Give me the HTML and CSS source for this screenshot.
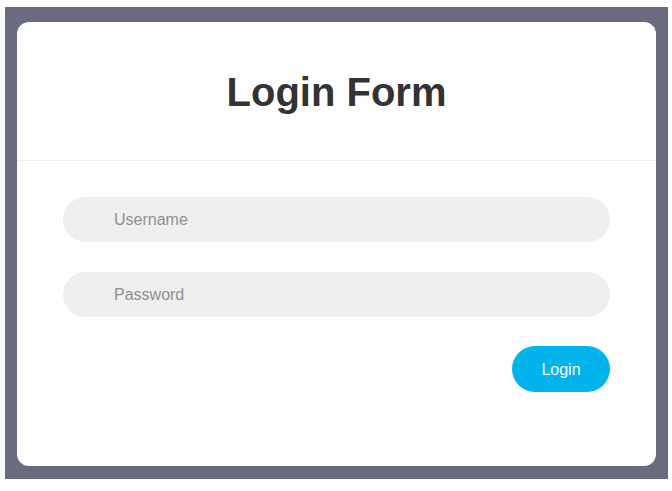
FILE: index.html
```html
<!DOCTYPE html>
<html>
<head>
<meta charset="utf-8">
<link rel="stylesheet" href="styles.css">
</head>
<body>
<div class="frame">
  <div class="card">
    <div class="card-header">
      <h1 class="title">Login Form</h1>
    </div>
    <form class="form">
      <input class="field" type="text" placeholder="Username">
      <input class="field" type="password" placeholder="Password">
      <div class="actions">
        <button class="btn" type="button">Login</button>
      </div>
    </form>
  </div>
</div>
</body>
</html>
```
FILE: styles.css
```css
html, body {
  margin: 0;
  padding: 0;
  background: #ffffff;
}
body {
  padding: 7px 4px 0 5px;
  font-family: "Liberation Sans", Arial, sans-serif;
}
.frame {
  background: #6b6b80;
  height: 472px;
  box-sizing: border-box;
  padding: 15px 12px 13px 12px;
}
.card {
  background: #ffffff;
  border-radius: 12px;
  height: 444px;
  display: flex;
  flex-direction: column;
}
.card-header {
  height: 138px;
  border-bottom: 1px solid #eeeeee;
  display: flex;
  align-items: center;
  justify-content: center;
}
.title {
  margin: 0;
  font-size: 40px;
  font-weight: bold;
  color: #333333;
  line-height: 1;
  padding-top: 2px;
}
.form {
  padding: 36px 46px 0 46px;
  display: flex;
  flex-direction: column;
  gap: 30px;
}
.field {
  height: 45px;
  box-sizing: border-box;
  border: none;
  outline: none;
  border-radius: 23px;
  background: #efefef;
  padding: 0 0 0 51px;
  font-family: "Liberation Sans", Arial, sans-serif;
  font-size: 16px;
  color: #333;
  margin: 0;
}
.field::placeholder {
  color: #8f8f8f;
  opacity: 1;
}
.actions {
  display: flex;
  justify-content: flex-end;
  margin-top: -1px;
}
.btn {
  width: 98px;
  height: 46px;
  border: none;
  border-radius: 23px;
  background: #03b4ec;
  color: #ffffff;
  font-family: "Liberation Sans", Arial, sans-serif;
  font-size: 16px;
  padding: 2px 0 0 0;
}
```
